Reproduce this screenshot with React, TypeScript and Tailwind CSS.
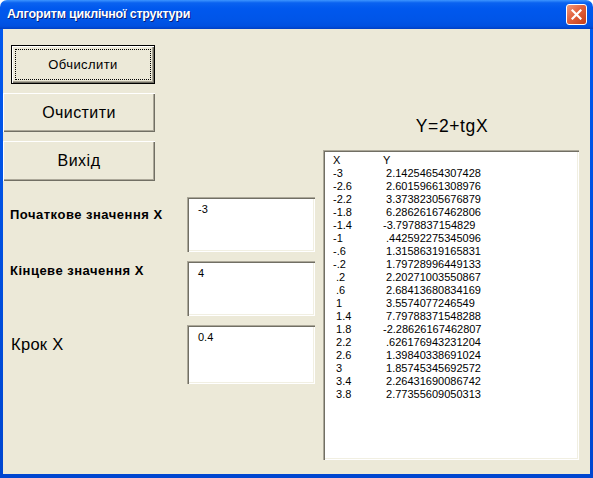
import React from 'react'

const ROWS: [string, string][] = [
  ['-3', ' 2.14254654307428'],
  ['-2.6', ' 2.60159661308976'],
  ['-2.2', ' 3.37382305676879'],
  ['-1.8', ' 6.28626167462806'],
  ['-1.4', '-3.7978837154829'],
  ['-1', ' .442592275345096'],
  ['-.6', ' 1.31586319165831'],
  ['-.2', ' 1.79728996449133'],
  [' .2', ' 2.20271003550867'],
  [' .6', ' 2.68413680834169'],
  [' 1', ' 3.5574077246549'],
  [' 1.4', ' 7.79788371548288'],
  [' 1.8', '-2.28626167462807'],
  [' 2.2', ' .626176943231204'],
  [' 2.6', ' 1.39840338691024'],
  [' 3', ' 1.85745345692572'],
  [' 3.4', ' 2.26431690086742'],
  [' 3.8', ' 2.77355609050313'],
]

const FONT = "font-['Liberation_Sans',Arial,sans-serif]"

function CloseButton() {
  return (
    <div className="w-[21px] h-[21px] rounded-[3px] border border-white bg-[linear-gradient(135deg,#f09a7c_0%,#e2613d_45%,#c33d18_100%)] flex items-center justify-center">
      <svg width="11" height="11" viewBox="0 0 11 11">
        <path d="M1.5 1.5 L9.5 9.5 M9.5 1.5 L1.5 9.5" stroke="#fff" strokeWidth="2.2" strokeLinecap="square" />
      </svg>
    </div>
  )
}

// classic raised button
function WinButton({
  label,
  className,
  textClass,
  isDefault,
}: {
  label: string
  className: string
  textClass: string
  isDefault?: boolean
}) {
  if (isDefault) {
    return (
      <div className={`${className} border border-black bg-[#ece9d8] shadow-[inset_1px_1px_0_#fff,inset_-1px_-1px_0_#716f64,inset_-2px_-2px_0_#aca899] p-[3px]`}>
        <div className="w-full h-full border border-dotted border-black flex items-center justify-center">
          <span className={textClass}>{label}</span>
        </div>
      </div>
    )
  }
  return (
    <div className={`${className} bg-[#ece9d8] shadow-[inset_1px_1px_0_#fff,inset_-1px_-1px_0_#716f64,inset_-2px_-2px_0_#aca899] flex items-center justify-center`}>
      <span className={textClass}>{label}</span>
    </div>
  )
}

function TextBox({ value, className }: { value: string; className: string }) {
  return (
    <div className={`${className} bg-white shadow-[inset_1px_1px_0_#aca899,inset_2px_2px_0_#716f64,inset_-1px_-1px_0_#fff,inset_-2px_-2px_0_#f1efe2] pl-[11px] pt-[4px] text-[11px] text-black`}>
      {value}
    </div>
  )
}

export default function App() {
  return (
    <div className={`w-[593px] h-[478px] flex flex-col ${FONT} select-none`}>
      {/* title bar */}
      <div className="h-[29px] shrink-0 rounded-t-[7px] bg-[linear-gradient(to_bottom,#3d95ff_0%,#0a62f0_10%,#0058ee_30%,#0055e8_70%,#0050e0_90%,#003fc4_100%)] flex items-center pl-[7px] pr-[6px]">
        <span className="text-white font-bold text-[12.5px] tracking-[-0.2px] [text-shadow:1px_1px_0_#0a1f7a] flex-1">
          Алгоритм циклічної структури
        </span>
        <CloseButton />
      </div>
      {/* body with window frame */}
      <div className="flex-1 flex pl-[3px] pr-[3px] pb-[4px] bg-[linear-gradient(to_bottom,#0058ee,#0046d0)]">
        <div className="flex-1 bg-[#ece9d8] flex">
          {/* left column */}
          <div className="w-[320px] flex flex-col">
            <WinButton
              label="Обчислити"
              isDefault
              className="ml-[8px] mt-[16px] w-[144px] h-[39px]"
              textClass="text-[13px] tracking-[0.4px] text-black"
            />
            <WinButton
              label="Очистити"
              className="mt-[9px] w-[152px] h-[39px]"
              textClass="text-[16px] tracking-[0.4px] text-black"
            />
            <WinButton
              label="Вихід"
              className="mt-[9px] w-[152px] h-[40px]"
              textClass="text-[16px] tracking-[0.5px] text-black"
            />
            <div className="mt-[16px] flex">
              <div className="w-[184px] pl-[7px] pt-[8px] text-[13px] tracking-[0.5px] font-bold text-black">Початкове значення X</div>
              <TextBox value="-3" className="w-[128px] h-[55px]" />
            </div>
            <div className="mt-[9px] flex">
              <div className="w-[184px] pl-[7px] pt-0 text-[13px] tracking-[0.5px] font-bold text-black">Кінцеве значення X</div>
              <TextBox value="4" className="w-[128px] h-[55px]" />
            </div>
            <div className="mt-[9px] flex">
              <div className="w-[184px] pl-[8px] pt-[7px] text-[16.5px] tracking-[0.3px] text-black">Крок X</div>
              <TextBox value="0.4" className="w-[128px] h-[59px]" />
            </div>
          </div>
          {/* right column */}
          <div className="flex flex-col">
            <div className="h-[121px] flex items-end justify-center pb-[11px] pl-[2px] text-[17.5px] tracking-[0.6px] text-black">Y=2+tgX</div>
            <div className="w-[256px] h-[310px] bg-white shadow-[inset_1px_1px_0_#aca899,inset_2px_2px_0_#716f64,inset_-1px_-1px_0_#fff,inset_-2px_-2px_0_#f1efe2] pl-[10px] pt-[4px] text-[11px] leading-[13px] text-black">
              <div className="flex">
                <span className="w-[50px]">X</span>
                <span>Y</span>
              </div>
              {ROWS.map(([x, y]) => (
                <div key={x} className="flex whitespace-pre">
                  <span className="w-[50px]">{x}</span>
                  <span>{y}</span>
                </div>
              ))}
            </div>
          </div>
        </div>
      </div>
    </div>
  )
}
